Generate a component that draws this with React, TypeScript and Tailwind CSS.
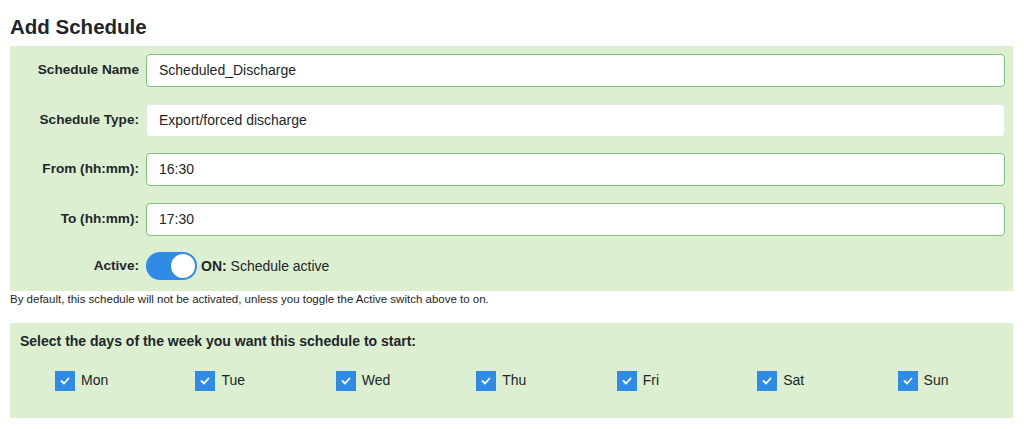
import React from 'react';

const days = ['Mon', 'Tue', 'Wed', 'Thu', 'Fri', 'Sat', 'Sun'];

const fields = [
  { label: 'Schedule Name', value: 'Scheduled_Discharge', border: 'border-[#7fbf80]' },
  { label: 'Schedule Type:', value: 'Export/forced discharge', border: 'border-[#e3ecdc]' },
  { label: 'From (hh:mm):', value: '16:30', border: 'border-[#7fbf80]' },
  { label: 'To (hh:mm):', value: '17:30', border: 'border-[#7fbf80]' },
];

const App = () => {
  return (
    <div className="w-[1024px] h-[429px] bg-white px-[10px] text-[#212529] font-['Liberation_Sans',Arial,sans-serif] overflow-hidden">
      <h1 className="pt-[15px] mb-[7px] text-[20.5px] leading-[24px] font-bold">Add Schedule</h1>

      {/* Schedule details */}
      <div className="w-[1003px] bg-[#dcf0d1] pt-[8px] pb-[11px] pr-[8px] flex flex-col gap-[16.5px]">
        {fields.map((f) => (
          <div key={f.label} className="flex items-center gap-[7px]">
            <label className="w-[129px] text-right text-[13.6px] font-bold">{f.label}</label>
            <div
              className={`flex-1 h-[33px] flex items-center pl-[12px] text-[14px] bg-white border rounded-[4px] ${f.border}`}
            >
              {f.value}
            </div>
          </div>
        ))}
        <div className="flex items-center gap-[7px]">
          <label className="w-[129px] text-right text-[13.6px] font-bold">Active:</label>
          <div className="flex items-center gap-[4px]">
            <div className="w-[51px] h-[28px] rounded-full bg-[#2f8be6] flex items-center justify-end pr-[2px]">
              <div className="w-[24px] h-[24px] rounded-full bg-white" />
            </div>
            <span className="text-[14px]">
              <b>ON:</b> Schedule active
            </span>
          </div>
        </div>
      </div>

      <p className="mt-[2px] text-[11.5px] leading-[13px]">
        By default, this schedule will not be activated, unless you toggle the Active switch above to on.
      </p>

      {/* Days */}
      <div className="mt-[17px] w-[1003px] bg-[#dcf0d1] pt-[10px] pb-[27px] px-[10px]">
        <div className="text-[14px] leading-[17px] font-bold">
          Select the days of the week you want this schedule to start:
        </div>
        <div className="mt-[20px] grid grid-cols-7">
          {days.map((d) => (
            <div key={d} className="flex items-center gap-[6px] pl-[35px]">
              <div className="w-[20px] h-[20px] bg-[#2f8be6] flex items-center justify-center">
                <svg width="10" height="8" viewBox="0 0 10 8">
                  <polyline points="1.5,4 4,6.5 8.5,1.5" fill="none" stroke="white" strokeWidth="1.8" strokeLinecap="round" strokeLinejoin="round" />
                </svg>
              </div>
              <span className="text-[14px]">{d}</span>
            </div>
          ))}
        </div>
      </div>
    </div>
  );
};

export default App;
